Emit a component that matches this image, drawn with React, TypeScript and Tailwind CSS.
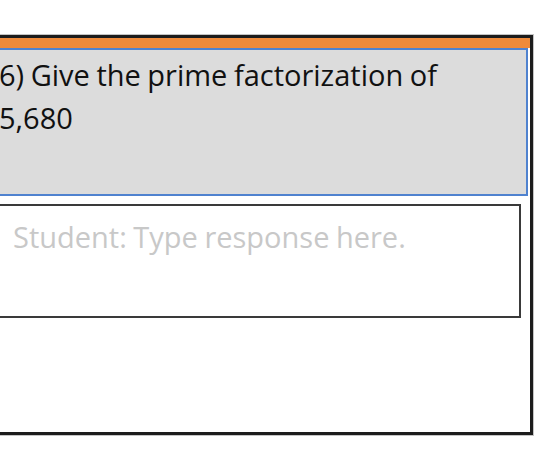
export default function App() {
  return (
    <div className="w-[540px] h-[472px] bg-white overflow-hidden">
      <div className="pt-[35px] -ml-[12px] w-[545px]">
        <div className="h-[400px] border-[3px] border-[#1c1c1c] shadow-[0_0_0_1px_#c4c4c4] bg-white">
          <div className="h-[10px] bg-[#ef8a3a]" />
          <div
            className="h-[148px] mr-[2px] border-2 border-[#4f82cf] bg-[#dcdcdc] pl-[6px] pt-[3px] text-[29px] leading-[43px] [word-spacing:-1px] text-[#111]"
            style={{ fontFamily: "'Open Sans', sans-serif" }}
          >
            6) Give the prime factorization of
            <br />
            5,680
          </div>
          <div
            className="mt-[8px] h-[114px] mr-[9px] border-2 border-[#3a3a3a] pl-[20px] pt-[11px] text-[29px] leading-[40px] [word-spacing:-1px] text-[#c8c8c8]"
            style={{ fontFamily: "'Open Sans', sans-serif" }}
          >
            Student: Type response here.
          </div>
        </div>
      </div>
    </div>
  );
}
